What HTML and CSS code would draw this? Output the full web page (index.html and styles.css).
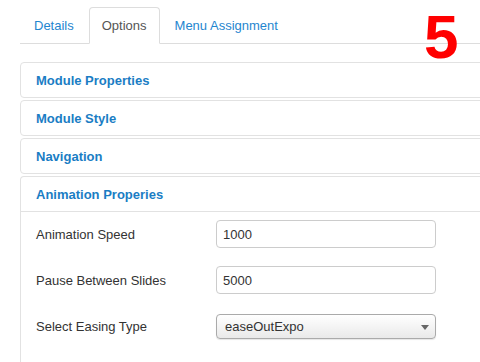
FILE: index.html
```html
<!DOCTYPE html>
<html lang="en">

<head>
    <meta charset="UTF-8">
    <title>Module Options</title>
    <link rel="stylesheet" href="styles.css">
</head>

<body>
    <div class="page">
        <ul class="tabs">
            <li><a href="#">Details</a></li>
            <li class="active"><a href="#">Options</a></li>
            <li><a href="#">Menu Assignment</a></li>
        </ul>
        <div class="step">5</div>

        <div class="panel">
            <div class="panel-head">Module Properties</div>
        </div>
        <div class="panel">
            <div class="panel-head">Module Style</div>
        </div>
        <div class="panel">
            <div class="panel-head">Navigation</div>
        </div>
        <div class="panel open">
            <div class="panel-head">Animation Properies</div>
            <div class="panel-body">
                <div class="row">
                    <label>Animation Speed</label>
                    <input type="text" value="1000">
                </div>
                <div class="row">
                    <label>Pause Between Slides</label>
                    <input type="text" value="5000">
                </div>
                <div class="row">
                    <label>Select Easing Type</label>
                    <div class="select">easeOutExpo<span class="caret"></span></div>
                </div>
            </div>
        </div>
    </div>
</body>

</html>
```

FILE: styles.css
```css
body {
    margin: 0;
    font-family: "Liberation Sans", Arial, sans-serif;
    font-size: 13px;
    color: #333;
    background: #fff;
}

.page {
    position: relative;
    height: 362px;
    padding: 7px 0 0 20px;
    box-sizing: border-box;
    overflow: hidden;
}

.tabs {
    list-style: none;
    margin: 0 0 18px;
    padding: 0;
    display: flex;
    border-bottom: 1px solid #ddd;
}

.tabs li {
    margin-right: 2px;
    margin-bottom: -1px;
}

.tabs li:first-child {
    margin-left: 1px;
}

.tabs a {
    display: block;
    height: 37px;
    line-height: 35px;
    padding: 0 12px;
    box-sizing: border-box;
    border: 1px solid transparent;
    border-radius: 4px 4px 0 0;
    color: #1f86cf;
    text-decoration: none;
}

.tabs .active a {
    color: #555;
    background: #fff;
    border-color: #ddd #ddd transparent;
}

.step {
    position: absolute;
    left: 424px;
    top: 6px;
    color: #f00;
    font-weight: bold;
    font-size: 62px;
    line-height: 62px;
}

.panel {
    margin-right: -12px;
    border: 1px solid #e2e2e2;
    border-radius: 4px;
    margin-bottom: 2px;
}

.panel-head {
    height: 34px;
    line-height: 35px;
    padding-left: 15px;
    font-weight: bold;
    color: #1a7dc4;
}

.panel.open {
    border-bottom: none;
    border-radius: 4px 4px 0 0;
}

.panel.open .panel-head {
    border-bottom: 1px solid #e2e2e2;
}

.panel-body {
    padding: 8px 0 20px 15px;
}

.row {
    display: flex;
    align-items: center;
    height: 28px;
    margin-bottom: 18px;
}

.row label {
    width: 180px;
}

.row input {
    width: 220px;
    height: 28px;
    box-sizing: border-box;
    padding: 0 6px;
    border: 1px solid #ccc;
    border-radius: 4px;
    font-family: inherit;
    font-size: 13px;
    color: #333;
}

.select {
    position: relative;
    width: 220px;
    height: 25px;
    line-height: 23px;
    box-sizing: border-box;
    padding: 0 8px;
    border: 1px solid #aaa;
    border-radius: 4px;
    background: linear-gradient(#fff, #e9e9e9);
    box-shadow: 0 1px 1px rgba(0, 0, 0, 0.1);
    color: #333;
}

.caret {
    position: absolute;
    right: 6px;
    top: 10px;
    border-left: 4px solid transparent;
    border-right: 4px solid transparent;
    border-top: 5px solid #666;
}
```
